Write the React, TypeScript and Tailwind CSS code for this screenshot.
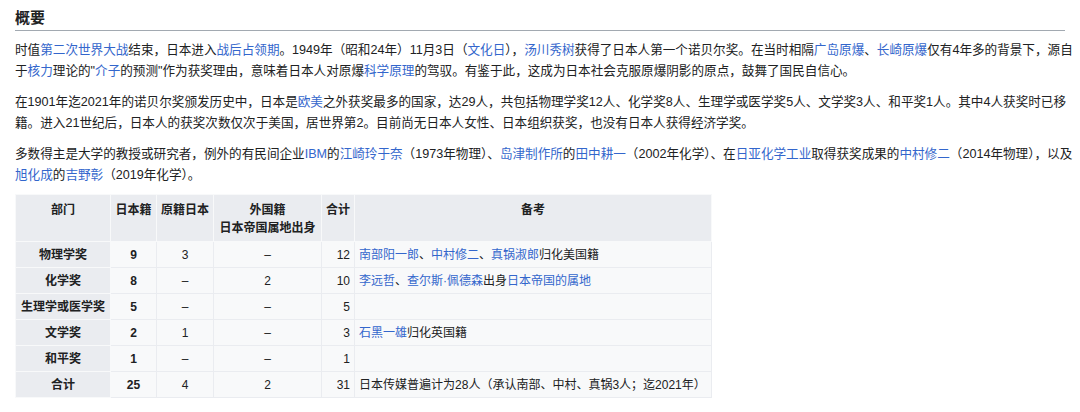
const L = ({ children }: { children: React.ReactNode }) => <span className="text-[#3366cc]">{children}</span>;

const rows: [string, string, string, string, string, React.ReactNode][] = [
  ["物理学奖", "9", "3", "–", "12", <><L>南部阳一郎</L>、<L>中村修二</L>、<L>真锅淑郎</L>归化美国籍</>],
  ["化学奖", "8", "–", "2", "10", <><L>李远哲</L>、<L>查尔斯·佩德森</L>出身<L>日本帝国的属地</L></>],
  ["生理学或医学奖", "5", "–", "–", "5", ""],
  ["文学奖", "2", "1", "–", "3", <><L>石黑一雄</L>归化英国籍</>],
  ["和平奖", "1", "–", "–", "1", ""],
  ["合计", "25", "4", "2", "31", "日本传媒普遍计为28人（承认南部、中村、真锅3人；迄2021年）"],
];

export default function App() {
  const th = "bg-[#eaecf0] border border-[#f8f9fa] font-bold px-1 align-top pt-[6px] whitespace-nowrap";
  const td = "border border-[#eaecf0] px-1 h-[26px] whitespace-nowrap";
  return (
    <div className="w-[1080px] h-[412px] bg-white text-[#202122] text-[12.6px] leading-[21px] px-[15px] pt-[8px] overflow-hidden" style={{ fontFamily: '"Liberation Sans", "Noto Sans CJK SC", sans-serif' }}>
      <h2 className="text-[15px] font-bold leading-[20px] pb-[2px] border-b border-[#a2a9b1] w-[1050px]">概要</h2>
      <div className="w-[1062px]">
        <p className="mt-[9px]">
          时值<L>第二次世界大战</L>结束，日本进入<L>战后占领期</L>。1949年（昭和24年）11月3日（<L>文化日</L>），<L>汤川秀树</L>获得了日本人第一个诺贝尔奖。在当时相隔<L>广岛原爆</L>、<L>长崎原爆</L>仅有4年多的背景下，源自于<L>核力</L>理论的"<L>介子</L>的预测"作为获奖理由，意味着日本人对原爆<L>科学原理</L>的驾驭。有鉴于此，这成为日本社会克服原爆阴影的原点，鼓舞了国民自信心。
        </p>
        <p className="mt-[10px]">
          在1901年迄2021年的诺贝尔奖颁发历史中，日本是<L>欧美</L>之外获奖最多的国家，达29人，共包括物理学奖12人、化学奖8人、生理学或医学奖5人、文学奖3人、和平奖1人。其中4人获奖时已移籍。进入21世纪后，日本人的获奖次数仅次于美国，居世界第2。目前尚无日本人女性、日本组织获奖，也没有日本人获得经济学奖。
        </p>
        <p className="mt-[10px]">
          多数得主是大学的教授或研究者，例外的有民间企业<L>IBM</L>的<L>江崎玲于奈</L>（1973年物理）、<L>岛津制作所</L>的<L>田中耕一</L>（2002年化学）、在<L>日亚化学工业</L>取得获奖成果的<L>中村修二</L>（2014年物理），以及<L>旭化成</L>的<L>吉野彰</L>（2019年化学）。
        </p>
      </div>
      <table className="mt-[8px] border-collapse bg-[#f8f9fa] text-[12px] leading-[18px] w-[697px]">
        <thead>
          <tr className="h-[47px]">
            <th className={th + " w-[95px]"}>部门</th>
            <th className={th + " w-[46px]"}>日本籍</th>
            <th className={th + " w-[54px]"}>原籍日本</th>
            <th className={th + " w-[108px]"}>外国籍<br />日本帝国属地出身</th>
            <th className={th + " w-[30px]"}>合计</th>
            <th className={th}>备考</th>
          </tr>
        </thead>
        <tbody>
          {rows.map((r) => (
            <tr key={r[0]}>
              <td className={td + " bg-[#eaecf0] border-[#f8f9fa] font-bold text-center"}>{r[0]}</td>
              <td className={td + " font-bold text-center"}>{r[1]}</td>
              <td className={td + " text-center"}>{r[2]}</td>
              <td className={td + " text-center"}>{r[3]}</td>
              <td className={td + " text-right"}>{r[4]}</td>
              <td className={td}>{r[5]}</td>
            </tr>
          ))}
        </tbody>
      </table>
    </div>
  );
}
